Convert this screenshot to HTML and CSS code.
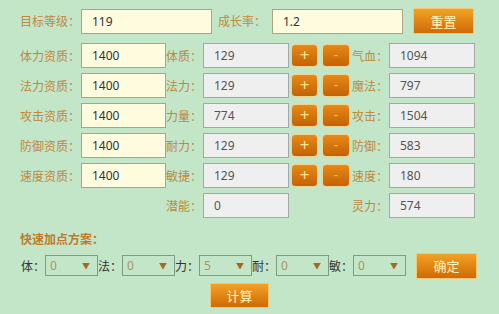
FILE: index.html
```html
<!DOCTYPE html>
<html lang="zh">
<head>
  <meta charset="UTF-8">
  <title>加点计算器</title>
  <link rel="stylesheet" href="styles.css">
</head>
<body>
  <div class="calc">
    <div class="top-row">
      <span class="lbl lbl-top">目标等级：</span>
      <span class="box box-yellow box-wide">119</span>
      <span class="lbl lbl-rate">成长率：</span>
      <span class="box box-yellow box-wide">1.2</span>
      <button class="btn btn-reset">重置</button>
    </div>

    <div class="row">
      <span class="lbl lbl-a">体力资质：</span>
      <span class="box box-yellow box-apt">1400</span>
      <span class="lbl lbl-b">体质：</span>
      <span class="box box-gray">129</span>
      <button class="pm pm-plus">+</button>
      <button class="pm pm-minus">-</button>
      <span class="lbl lbl-c">气血：</span>
      <span class="box box-gray">1094</span>
    </div>
    <div class="row">
      <span class="lbl lbl-a">法力资质：</span>
      <span class="box box-yellow box-apt">1400</span>
      <span class="lbl lbl-b">法力：</span>
      <span class="box box-gray">129</span>
      <button class="pm pm-plus">+</button>
      <button class="pm pm-minus">-</button>
      <span class="lbl lbl-c">魔法：</span>
      <span class="box box-gray">797</span>
    </div>
    <div class="row">
      <span class="lbl lbl-a">攻击资质：</span>
      <span class="box box-yellow box-apt">1400</span>
      <span class="lbl lbl-b">力量：</span>
      <span class="box box-gray">774</span>
      <button class="pm pm-plus">+</button>
      <button class="pm pm-minus">-</button>
      <span class="lbl lbl-c">攻击：</span>
      <span class="box box-gray">1504</span>
    </div>
    <div class="row">
      <span class="lbl lbl-a">防御资质：</span>
      <span class="box box-yellow box-apt">1400</span>
      <span class="lbl lbl-b">耐力：</span>
      <span class="box box-gray">129</span>
      <button class="pm pm-plus">+</button>
      <button class="pm pm-minus">-</button>
      <span class="lbl lbl-c">防御：</span>
      <span class="box box-gray">583</span>
    </div>
    <div class="row">
      <span class="lbl lbl-a">速度资质：</span>
      <span class="box box-yellow box-apt">1400</span>
      <span class="lbl lbl-b">敏捷：</span>
      <span class="box box-gray">129</span>
      <button class="pm pm-plus">+</button>
      <button class="pm pm-minus">-</button>
      <span class="lbl lbl-c">速度：</span>
      <span class="box box-gray">180</span>
    </div>
    <div class="row">
      <span class="lbl lbl-a"></span>
      <span class="box-apt"></span>
      <span class="lbl lbl-b">潜能：</span>
      <span class="box box-gray">0</span>
      <span class="pm-space"></span>
      <span class="lbl lbl-c">灵力：</span>
      <span class="box box-gray">574</span>
    </div>

    <div class="plan-title">快速加点方案：</div>
    <div class="plan-row">
      <span class="plbl">体：</span>
      <span class="sel">0<i class="arrow">▼</i></span>
      <span class="plbl">法：</span>
      <span class="sel">0<i class="arrow">▼</i></span>
      <span class="plbl">力：</span>
      <span class="sel">5<i class="arrow">▼</i></span>
      <span class="plbl">耐：</span>
      <span class="sel">0<i class="arrow">▼</i></span>
      <span class="plbl">敏：</span>
      <span class="sel">0<i class="arrow">▼</i></span>
      <button class="btn btn-ok">确定</button>
    </div>
    <div class="calc-row">
      <button class="btn btn-calc">计算</button>
    </div>
  </div>
</body>
</html>
```

FILE: styles.css
```css
html, body {
  margin: 0; padding: 0;
  background: #c3e6c9;
  font-family: "Noto Sans", "Noto Sans CJK SC", sans-serif;
  font-size: 12px;
}
.calc { padding: 8px 0 0 20px; }

.lbl { color: #c0883e; white-space: nowrap; }
.top-row { display: flex; align-items: center; height: 26px; }
.lbl-top { width: 61px; }
.lbl-rate { width: 54px; margin-left: 6px; }

.box {
  box-sizing: border-box; height: 25px;
  display: flex; align-items: center;
  padding-left: 10px; color: #333;
}
.box-yellow { background: #fffbdf; border: 1px solid #aaa685; }
.box-wide { width: 131px; }
.box-apt { width: 85px; }
.box-gray { width: 86px; background: #efefef; border: 1px solid #a6a6a6; color: #555; }

.btn {
  box-sizing: border-box; width: 61px; height: 26px;
  border: 1px solid #f6c772; border-radius: 1px;
  background: linear-gradient(#f2a225, #cf6a05);
  color: #fff3b8; font: inherit; font-size: 13px;
  padding: 0; cursor: pointer;
}
.btn-reset { margin-left: 10px; }

.row { display: flex; align-items: center; height: 25px; margin-top: 5px; }
.top-row + .row { margin-top: 9px; }
.lbl-a { width: 61px; }
.lbl-b { width: 37px; }
.lbl-c { width: 37px; margin-left: 2px; }

.pm {
  box-sizing: border-box; width: 27px; height: 23px;
  border: 1px solid #f1d28f; border-radius: 4px;
  background: linear-gradient(#e68a18, #c46203);
  color: #ffe38c; font: inherit; font-size: 17px; line-height: 1;
  padding: 0 0 2px 0;
}
.pm-plus { margin-left: 2px; }
.pm-minus { margin-left: 4px; width: 28px; color: #f7b45e; font-size: 15px; }
.pm-space { width: 61px; }

.plan-title {
  margin-top: 12px; height: 20px; line-height: 20px;
  font-weight: bold; color: #c07a2c;
}
.plan-row { display: flex; align-items: center; height: 25px; margin-top: 3px; padding-left: 1px; }
.plbl { width: 24px; color: #333; }
.sel {
  box-sizing: border-box; width: 53px; height: 21px;
  border: 1px solid #7d9c80;
  display: flex; align-items: center; justify-content: space-between;
  padding: 0 7px 0 4px; color: #b0915e;
}
.arrow { font-style: normal; font-size: 8px; color: #a5691c; }
.btn-ok { margin-left: 10px; }

.calc-row { margin-top: 5px; padding-left: 190px; }
.btn-calc { width: 59px; height: 25px; }
```
